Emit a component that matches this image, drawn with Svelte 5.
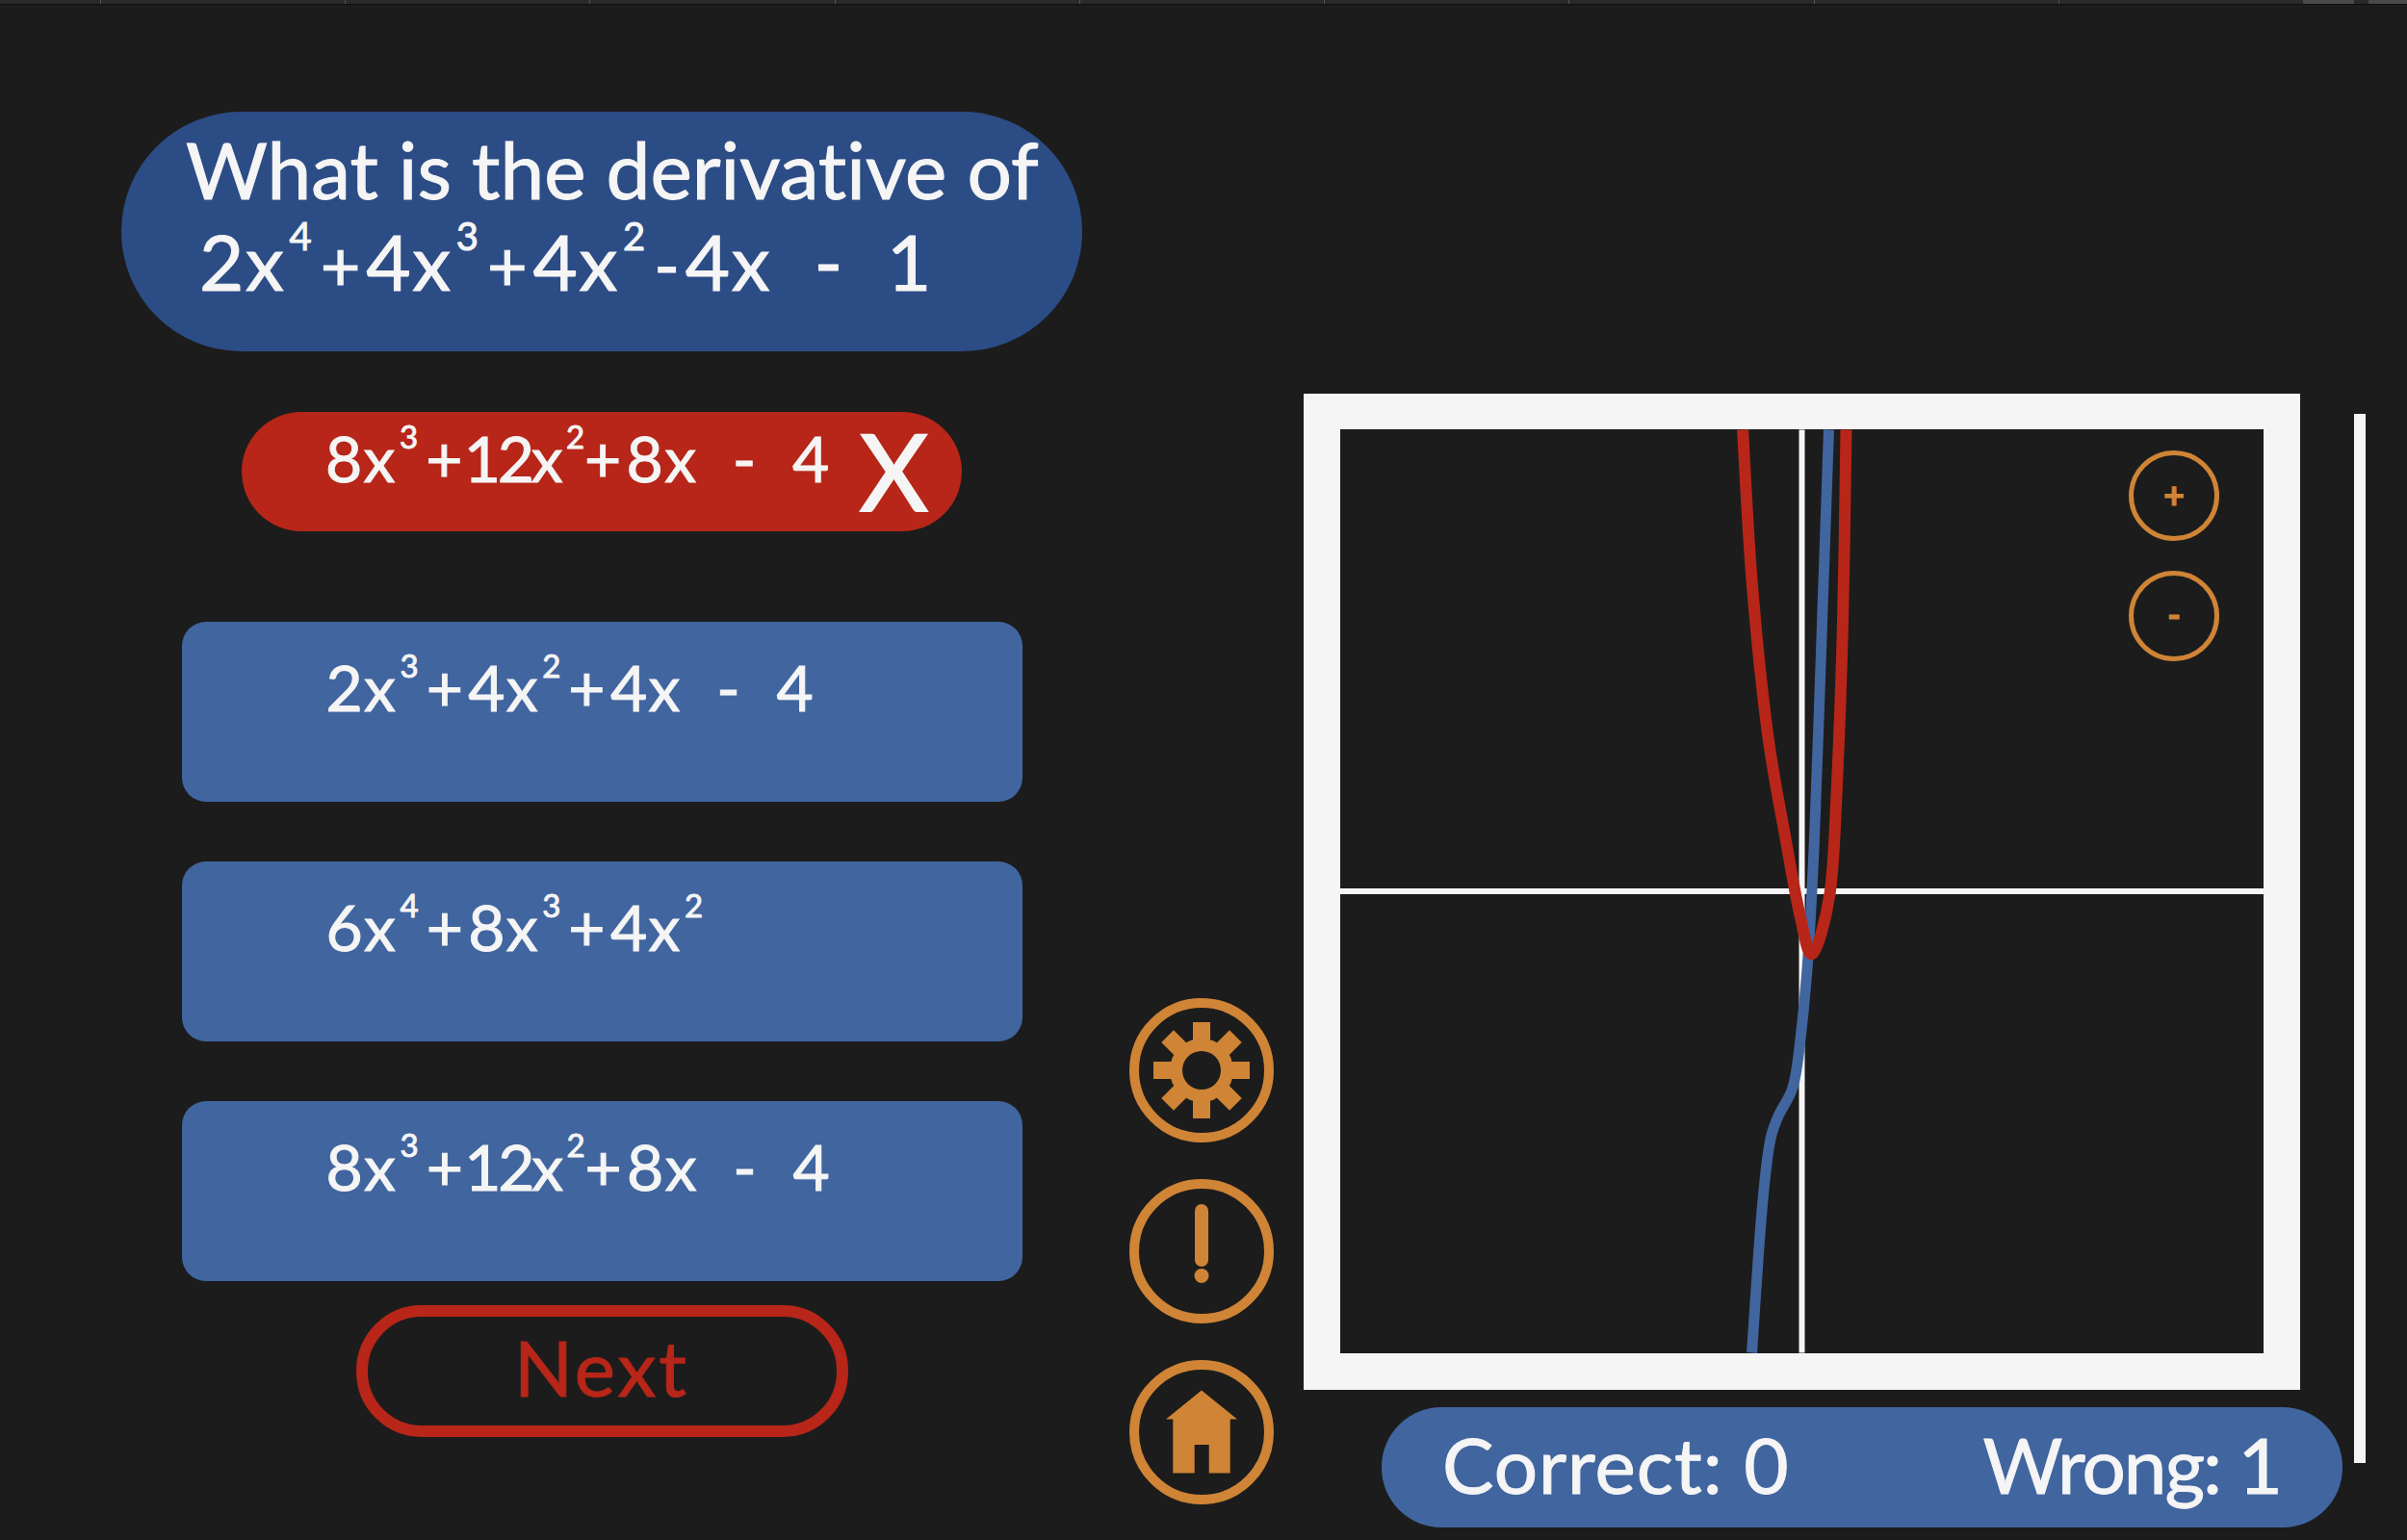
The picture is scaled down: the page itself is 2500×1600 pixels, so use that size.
<script>
  const question = [["2x", "4"], ["+", ""], ["4x", "3"], ["+", ""], ["4x", "2"], ["-", ""], ["4x", ""], ["  -  1", ""]];

  const answers = [
    [["2x", "3"], ["+", ""], ["4x", "2"], ["+", ""], ["4x", ""], ["  -  4", ""]],
    [["6x", "4"], ["+", ""], ["8x", "3"], ["+", ""], ["4x", "2"]],
    [["8x", "3"], ["+", ""], ["12x", "2"], ["+", ""], ["8x", ""], ["  -  4", ""]],
  ];

  const picked = [["8x", "3"], ["+", ""], ["12x", "2"], ["+", ""], ["8x", ""], ["  -  4", ""]];

  const ticks = Array(9).fill(0);

  const redPoints = [[418.5, 0], [428, 157], [444, 313], [463, 425], [478, 505], [491, 545], [509, 483], [516, 380], [522.5, 202], [526, 0]];
  const bluePoints = [[508, 0], [501, 202], [493, 425], [486, 554], [478, 638], [470.5, 684], [455, 715], [446, 745], [437.6, 822], [428, 960]];

  // catmull-rom through the sampled points
  function smooth(pts) {
    let d = `M${pts[0][0]} ${pts[0][1]}`;
    for (let i = 0; i < pts.length - 1; i++) {
      const p0 = pts[i - 1] || pts[i];
      const p1 = pts[i];
      const p2 = pts[i + 1];
      const p3 = pts[i + 2] || p2;
      const c1x = p1[0] + (p2[0] - p0[0]) / 6;
      const c1y = p1[1] + (p2[1] - p0[1]) / 6;
      const c2x = p2[0] - (p3[0] - p1[0]) / 6;
      const c2y = p2[1] - (p3[1] - p1[1]) / 6;
      d += ` C${c1x} ${c1y} ${c2x} ${c2y} ${p2[0]} ${p2[1]}`;
    }
    return d;
  }
</script>

{#snippet poly(parts)}
  {#each parts as part}<span class="term" class:op={part[0] === "+" || part[0] === "-"} class:tight={part[0] === "12x"}>{part[0]}</span>{#if part[1]}<sup class:tight-sup={part[0] === "12x"}>{part[1]}</sup>{/if}{/each}
{/snippet}

<div class="topbar">
  <div class="tabs">
    {#each ticks as _}
      <span class="tick"></span>
    {/each}
  </div>
  <span class="thumb"></span>
  <span class="thumb thumb-end"></span>
</div>

<main class="page">
  <section class="quiz">
    <div class="question">
      <div class="q-line q-title">What is the derivative of</div>
      <div class="q-line q-poly">{@render poly(question)}</div>
    </div>

    <div class="picked">
      <span class="poly">{@render poly(picked)}</span>
      <span class="cross">X</span>
    </div>

    {#each answers as answer}
      <button class="answer"><span class="poly">{@render poly(answer)}</span></button>
    {/each}

    <button class="next">Next</button>
  </section>

  <nav class="icons">
    <svg viewBox="0 0 150 150" class="icon">
      <circle cx="75" cy="75" r="70" class="ring" />
      <circle cx="75" cy="75" r="26.5" class="gear" />
      {#each [0, 45, 90, 135] as angle}
        <rect x="25" y="66" width="100" height="18" transform="rotate({angle} 75 75)" />
      {/each}
      <circle cx="75" cy="75" r="20" class="hole" />
    </svg>
    <svg viewBox="0 0 150 150" class="icon">
      <circle cx="75" cy="75" r="70" class="ring" />
      <rect x="68" y="26" width="14" height="65" rx="7" />
      <circle cx="75" cy="100.5" r="7.5" />
    </svg>
    <svg viewBox="0 0 150 150" class="icon">
      <circle cx="75" cy="75" r="70" class="ring" />
      <path d="M75 31.5 L112 61.5 H104.7 V117.5 H82.7 V88 H67.7 V117.5 H45.3 V61.5 H38 Z" />
    </svg>
  </nav>

  <section class="graph">
    <div class="frame">
      <div class="plot">
        <svg viewBox="0 0 960 960" class="curves">
          <line x1="480" y1="0" x2="480" y2="960" class="axis" />
          <line x1="0" y1="480" x2="960" y2="480" class="axis" />
          <path d={smooth(bluePoints)} class="blue" />
          <path d={smooth(redPoints)} class="red" />
        </svg>
        <div class="zoom">
          <button class="zoom-btn">+</button>
          <button class="zoom-btn">-</button>
        </div>
      </div>
    </div>
    <div class="score">
      <span>Correct: 0</span>
      <span class="wrong">Wrong: 1</span>
    </div>
  </section>

  <div class="scrollbar"></div>
</main>

<style>
  :global(body) {
    margin: 0;
    background: #1c1c1c;
  }

  .topbar {
    height: 4px;
    background: #2a2a2a;
    border-bottom: 1px solid #0e0e0e;
    display: flex;
  }

  .tabs {
    width: 2392px;
    display: flex;
    padding-left: 104px;
    box-sizing: border-box;
  }

  .tick {
    width: 254px;
    border-left: 1px solid #555;
  }

  .thumb {
    width: 53px;
    background: #4a4a4a;
  }

  .thumb-end {
    width: 40px;
    margin-left: 15px;
  }

  .page {
    width: 2500px;
    height: 1595px;
    display: flex;
    font-family: "Lato", "Noto Sans", sans-serif;
    font-variant-ligatures: none;
    -webkit-text-stroke: 1px currentColor;
    color: #f5f5f5;
    overflow: hidden;
  }

  .quiz {
    width: 998px;
    margin-left: 126px;
    padding-top: 111px;
    display: flex;
    flex-direction: column;
    align-items: center;
  }

  .question {
    box-sizing: border-box;
    width: 998px;
    height: 249px;
    padding: 10px 0 0 67px;
    border-radius: 125px;
    background: #2c4c85;
    font-size: 80px;
  }

  .q-line {
    height: 97px;
    white-space: pre;
  }

  .q-title {
    font-size: 82px;
  }

  .q-poly {
    padding-left: 14px;
  }

  .q-poly .op {
    font-size: 0.9em;
  }

  .poly {
    white-space: pre;
  }

  .term {
    white-space: pre;
    letter-spacing: 0.02em;
  }

  .op {
    margin: 0 0.06em;
  }

  .tight {
    margin-left: -0.06em;
    letter-spacing: -0.05em;
  }

  sup {
    font-size: 0.5em;
    line-height: 0;
    vertical-align: 1.05em;
    margin: 0 0.12em 0 0.1em;
  }

  .tight-sup {
    margin: 0 -0.12em 0 0.2em;
  }

  .picked {
    box-sizing: border-box;
    width: 748px;
    height: 124px;
    margin-top: 63px;
    padding: 8px 0 0 87px;
    border-radius: 62px;
    background: #b72618;
    font-size: 66px;
    display: flex;
  }

  .cross {
    font-size: 110px;
    line-height: 1;
    margin-left: 30px;
    margin-top: -3px;
    -webkit-text-stroke: 2px currentColor;
  }

  .answer {
    box-sizing: border-box;
    width: 873px;
    height: 187px;
    margin-top: 62px;
    padding: 28px 0 0 150px;
    border: 0;
    border-radius: 25px;
    background: #41659f;
    color: inherit;
    font: inherit;
    font-size: 66px;
    text-align: left;
    line-height: 80px;
    display: flex;
    align-items: flex-start;
  }

  .picked + .answer {
    margin-top: 94px;
  }

  .next {
    box-sizing: border-box;
    width: 511px;
    height: 137px;
    margin-top: 25px;
    padding: 0 0 10px;
    border: 12px solid #b72618;
    border-radius: 68px;
    background: none;
    color: #b72618;
    font: inherit;
    font-size: 80px;
    letter-spacing: 3px;
  }

  .icons {
    width: 150px;
    margin-left: 49px;
    padding-bottom: 37px;
    display: flex;
    flex-direction: column;
    justify-content: flex-end;
    gap: 38px;
  }

  .icon {
    display: block;
    width: 150px;
    height: 150px;
    fill: #cf8436;
  }

  .ring {
    fill: none;
    stroke: #cf8436;
    stroke-width: 10;
  }

  .gear {
    fill: none;
    stroke: #cf8436;
    stroke-width: 13;
  }

  .hole {
    fill: #1c1c1c;
  }

  .graph {
    width: 1079px;
    margin-left: 31px;
    padding-top: 404px;
  }

  .frame {
    box-sizing: border-box;
    width: 1035px;
    height: 1035px;
    padding: 37px 38px;
    background: #f5f5f5;
  }

  .plot {
    position: relative;
    width: 959px;
    height: 960px;
    background: #1c1c1c;
    overflow: hidden;
  }

  .curves {
    display: block;
    width: 100%;
    height: 100%;
    fill: none;
  }

  .axis {
    stroke: #f5f5f5;
    stroke-width: 6;
  }

  .blue {
    stroke: #41659f;
    stroke-width: 11;
  }

  .red {
    stroke: #b72618;
    stroke-width: 12;
  }

  .zoom {
    position: absolute;
    top: 22px;
    right: 46px;
    display: flex;
    flex-direction: column;
    gap: 31px;
  }

  .zoom-btn {
    box-sizing: border-box;
    width: 94px;
    height: 94px;
    padding: 0 0 4px;
    border: 5px solid #cf8436;
    border-radius: 50%;
    background: none;
    color: #cf8436;
    font: inherit;
    font-size: 38px;
    font-weight: 700;
  }

  .score {
    box-sizing: border-box;
    width: 998px;
    height: 125px;
    margin: 18px 0 0 81px;
    padding: 0 64px 8px 63px;
    border-radius: 62px;
    background: #41659f;
    font-size: 80px;
    letter-spacing: 1px;
    display: flex;
    justify-content: space-between;
    align-items: center;
  }

  .wrong {
    letter-spacing: -2px;
  }

  .scrollbar {
    width: 12px;
    height: 1090px;
    margin: 425px 0 0 12px;
    background: #f5f5f5;
  }
</style>
